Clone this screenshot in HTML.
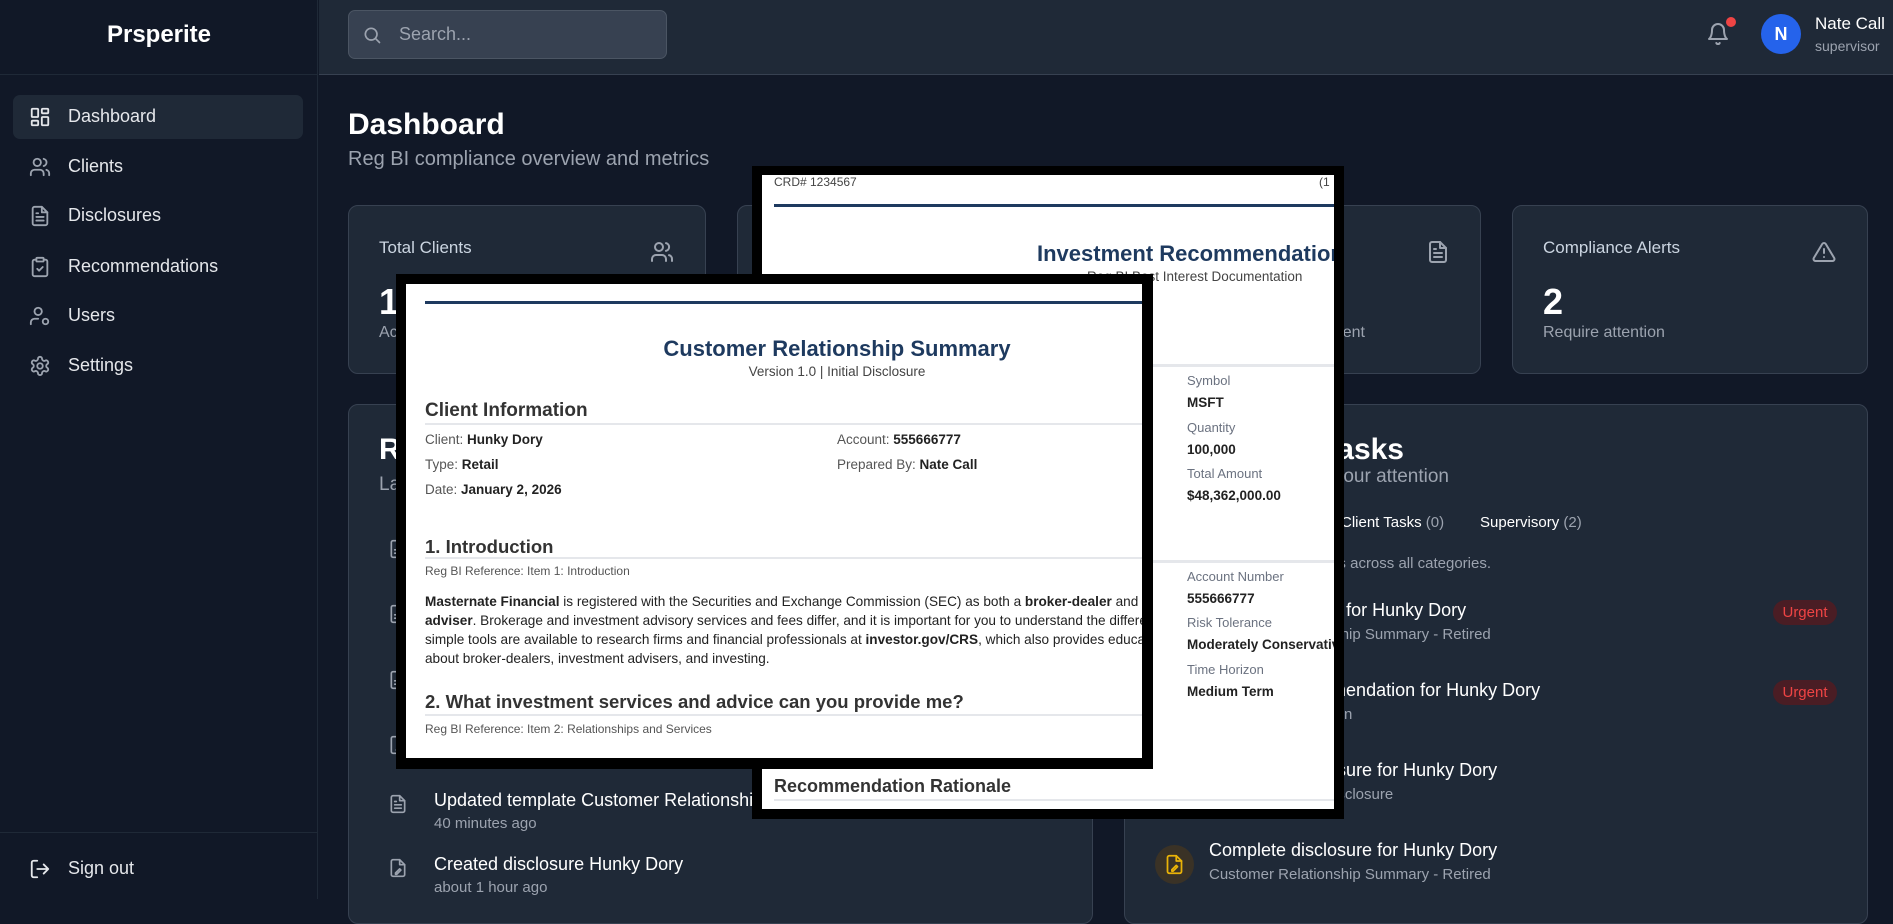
<!DOCTYPE html>
<html><head><meta charset="utf-8"><style>
*{margin:0;padding:0;box-sizing:border-box}
body{width:1893px;height:899px;overflow:hidden;background:#111827;font-family:"Liberation Sans",Arial,sans-serif;position:relative;color:#fff}
.a{position:absolute;white-space:nowrap}
svg{position:absolute;fill:none;stroke-linecap:round;stroke-linejoin:round}
.card{position:absolute;background:#1f2937;border:1px solid #374151;border-radius:10px}
.nav{position:absolute;left:68px;font-size:18px;color:#e5e7eb}
.g{color:#9ca3af}
.doc{color:#333}
.lbl{font-size:13px;color:#6b7280}
.val{font-size:13.5px;font-weight:bold;color:#222}
</style></head><body>
<!-- sidebar -->
<div class="a" style="left:0;top:0;width:318px;height:899px;background:#111827;border-right:1px solid #1f2937"></div>
<div class="a" style="left:0;top:0;width:318px;height:75px;border-bottom:1px solid #1f2937;text-align:center;line-height:70px;font-size:24px;font-weight:bold">Prsperite</div>
<div class="a" style="left:13px;top:95px;width:290px;height:44px;background:#1f2937;border-radius:7px"></div>
<svg style="left:29px;top:106px" width="22" height="22" viewBox="0 0 24 24" stroke="#e5e7eb" stroke-width="2"><rect x="3" y="3" width="7" height="9" rx="1"/><rect x="14" y="3" width="7" height="5" rx="1"/><rect x="14" y="12" width="7" height="9" rx="1"/><rect x="3" y="16" width="7" height="5" rx="1"/></svg>
<div class="nav" style="top:106px">Dashboard</div>
<svg style="left:29px;top:156px" width="22" height="22" viewBox="0 0 24 24" stroke="#9ca3af" stroke-width="2"><circle cx="9" cy="7" r="4"/><path d="M2 21v-2a4 4 0 0 1 4-4h6a4 4 0 0 1 4 4v2M16 3.1a4 4 0 0 1 0 7.8M22 21v-2a4 4 0 0 0-3-3.9"/></svg>
<div class="nav" style="top:156px">Clients</div>
<svg style="left:29px;top:205px" width="22" height="22" viewBox="0 0 24 24" stroke="#9ca3af" stroke-width="2"><path d="M14 2H6a2 2 0 0 0-2 2v16a2 2 0 0 0 2 2h12a2 2 0 0 0 2-2V8z"/><path d="M14 2v6h6M16 13H8M16 17H8M10 9H8"/></svg>
<div class="nav" style="top:205px">Disclosures</div>
<svg style="left:29px;top:256px" width="22" height="22" viewBox="0 0 24 24" stroke="#9ca3af" stroke-width="2"><rect x="8" y="2" width="8" height="4" rx="1"/><path d="M16 4h2a2 2 0 0 1 2 2v14a2 2 0 0 1-2 2H6a2 2 0 0 1-2-2V6a2 2 0 0 1 2-2h2M9 14l2 2 4-4"/></svg>
<div class="nav" style="top:256px">Recommendations</div>
<svg style="left:29px;top:305px" width="22" height="22" viewBox="0 0 24 24" stroke="#9ca3af" stroke-width="2"><circle cx="10" cy="7" r="4"/><path d="M2 21v-2a4 4 0 0 1 4-4h4"/><circle cx="18" cy="18" r="3"/></svg>
<div class="nav" style="top:305px">Users</div>
<svg style="left:29px;top:355px" width="22" height="22" viewBox="0 0 24 24" stroke="#9ca3af" stroke-width="2"><path d="M12.2 2h-.4a2 2 0 0 0-2 2v.2a2 2 0 0 1-1 1.7l-.4.3a2 2 0 0 1-2 0l-.2-.1a2 2 0 0 0-2.7.7l-.2.4a2 2 0 0 0 .7 2.7l.2.1a2 2 0 0 1 1 1.7v.5a2 2 0 0 1-1 1.7l-.2.1a2 2 0 0 0-.7 2.7l.2.4a2 2 0 0 0 2.7.7l.2-.1a2 2 0 0 1 2 0l.4.3a2 2 0 0 1 1 1.7v.2a2 2 0 0 0 2 2h.4a2 2 0 0 0 2-2v-.2a2 2 0 0 1 1-1.7l.4-.3a2 2 0 0 1 2 0l.2.1a2 2 0 0 0 2.7-.7l.2-.4a2 2 0 0 0-.7-2.7l-.2-.1a2 2 0 0 1-1-1.7v-.5a2 2 0 0 1 1-1.7l.2-.1a2 2 0 0 0 .7-2.7l-.2-.4a2 2 0 0 0-2.7-.7l-.2.1a2 2 0 0 1-2 0l-.4-.3a2 2 0 0 1-1-1.7V4a2 2 0 0 0-2-2z"/><circle cx="12" cy="12" r="3"/></svg>
<div class="nav" style="top:355px">Settings</div>
<div class="a" style="left:0;top:832px;width:318px;border-top:1px solid #1f2937"></div>
<svg style="left:29px;top:858px" width="22" height="22" viewBox="0 0 24 24" stroke="#e5e7eb" stroke-width="2"><path d="M9 21H5a2 2 0 0 1-2-2V5a2 2 0 0 1 2-2h4M16 17l5-5-5-5M21 12H9"/></svg>
<div class="nav" style="top:858px">Sign out</div>
<!-- header -->
<div class="a" style="left:319px;top:0;width:1574px;height:75px;background:#1f2937;border-bottom:1px solid #374151"></div>
<div class="a" style="left:348px;top:10px;width:319px;height:49px;background:#374151;border:1px solid #4b5563;border-radius:7px"></div>
<svg style="left:362px;top:25px" width="20" height="20" viewBox="0 0 24 24" stroke="#9ca3af" stroke-width="2"><circle cx="11" cy="11" r="7"/><path d="M21 21l-4.3-4.3"/></svg>
<div class="a g" style="left:399px;top:24px;font-size:18px">Search...</div>
<svg style="left:1706px;top:22px" width="24" height="24" viewBox="0 0 24 24" stroke="#9ca3af" stroke-width="2"><path d="M6 8a6 6 0 0 1 12 0c0 7 3 9 3 9H3s3-2 3-9M10.3 21a1.9 1.9 0 0 0 3.4 0"/></svg>
<div class="a" style="left:1726px;top:17px;width:10px;height:10px;border-radius:50%;background:#ef4444"></div>
<div class="a" style="left:1761px;top:14px;width:40px;height:40px;border-radius:50%;background:#2563eb;text-align:center;line-height:40px;font-size:18px;font-weight:bold">N</div>
<div class="a" style="left:1815px;top:14px;font-size:17px">Nate Call</div>
<div class="a g" style="left:1815px;top:38px;font-size:14px">supervisor</div>
<!-- title -->
<div class="a" style="left:348px;top:108px;font-size:30px;font-weight:bold">Dashboard</div>
<div class="a g" style="left:348px;top:148px;font-size:20px">Reg BI compliance overview and metrics</div>
<!-- stat cards -->
<div class="card" style="left:348px;top:205px;width:358px;height:169px"></div>
<div class="a g" style="left:379px;top:238px;font-size:17px;color:#cbd5e1">Total Clients</div>
<svg style="left:650px;top:240px" width="24" height="24" viewBox="0 0 24 24" stroke="#9ca3af" stroke-width="2"><circle cx="9" cy="7" r="4"/><path d="M2 21v-2a4 4 0 0 1 4-4h6a4 4 0 0 1 4 4v2M16 3.1a4 4 0 0 1 0 7.8M22 21v-2a4 4 0 0 0-3-3.9"/></svg>
<div class="a" style="left:379px;top:281px;font-size:36px;font-weight:bold">1</div>
<div class="a g" style="left:379px;top:324px;font-size:16px">Active clients</div>
<div class="card" style="left:737px;top:205px;width:356px;height:169px"></div>
<div class="card" style="left:1124px;top:205px;width:357px;height:169px"></div>
<svg style="left:1426px;top:240px" width="24" height="24" viewBox="0 0 24 24" stroke="#9ca3af" stroke-width="2"><path d="M14 2H6a2 2 0 0 0-2 2v16a2 2 0 0 0 2 2h12a2 2 0 0 0 2-2V8z"/><path d="M14 2v6h6M16 13H8M16 17H8M10 9H8"/></svg>
<div class="a g" style="right:528px;top:324px;font-size:16px">Awaiting acknowledgment</div>
<div class="card" style="left:1512px;top:205px;width:356px;height:169px"></div>
<div class="a" style="left:1543px;top:238px;font-size:17px;color:#cbd5e1">Compliance Alerts</div>
<svg style="left:1812px;top:240px" width="24" height="24" viewBox="0 0 24 24" stroke="#9ca3af" stroke-width="2"><path d="M10.3 3.9L1.8 18a2 2 0 0 0 1.7 3h17a2 2 0 0 0 1.7-3L13.7 3.9a2 2 0 0 0-3.4 0zM12 9v4M12 17h.01"/></svg>
<div class="a" style="left:1543px;top:281px;font-size:36px;font-weight:bold">2</div>
<div class="a g" style="left:1543px;top:324px;font-size:16px">Require attention</div>
<!-- panels -->
<div class="card" style="left:348px;top:404px;width:745px;height:520px"></div>
<div class="a" style="left:379px;top:433px;font-size:30px;font-weight:bold">Recent Activity</div>
<div class="a g" style="left:379px;top:474px;font-size:19px">Latest actions</div>
<svg style="left:388px;top:539px" width="20" height="20" viewBox="0 0 24 24" stroke="#9ca3af" stroke-width="2"><path d="M14 2H6a2 2 0 0 0-2 2v16a2 2 0 0 0 2 2h12a2 2 0 0 0 2-2V8z"/><path d="M14 2v6h6M16 13H8M16 17H8"/></svg>
<svg style="left:388px;top:604px" width="20" height="20" viewBox="0 0 24 24" stroke="#9ca3af" stroke-width="2"><path d="M14 2H6a2 2 0 0 0-2 2v16a2 2 0 0 0 2 2h12a2 2 0 0 0 2-2V8z"/><path d="M14 2v6h6M16 13H8M16 17H8"/></svg>
<svg style="left:388px;top:670px" width="20" height="20" viewBox="0 0 24 24" stroke="#9ca3af" stroke-width="2"><path d="M14 2H6a2 2 0 0 0-2 2v16a2 2 0 0 0 2 2h12a2 2 0 0 0 2-2V8z"/><path d="M14 2v6h6M16 13H8M16 17H8"/></svg>
<svg style="left:388px;top:735px" width="20" height="20" viewBox="0 0 24 24" stroke="#9ca3af" stroke-width="2"><path d="M14 2H6a2 2 0 0 0-2 2v16a2 2 0 0 0 2 2h12a2 2 0 0 0 2-2V8z"/><path d="M14 2v6h6M10 18l4-4"/></svg>
<svg style="left:388px;top:794px" width="20" height="20" viewBox="0 0 24 24" stroke="#9ca3af" stroke-width="2"><path d="M14 2H6a2 2 0 0 0-2 2v16a2 2 0 0 0 2 2h12a2 2 0 0 0 2-2V8z"/><path d="M14 2v6h6M16 13H8M16 17H8M10 9H8"/></svg>
<div class="a" style="left:434px;top:790px;font-size:18px">Updated template Customer Relationship Summary</div>
<div class="a g" style="left:434px;top:815px;font-size:15px">40 minutes ago</div>
<svg style="left:388px;top:858px" width="20" height="20" viewBox="0 0 24 24" stroke="#9ca3af" stroke-width="2"><path d="M14 2H6a2 2 0 0 0-2 2v16a2 2 0 0 0 2 2h12a2 2 0 0 0 2-2V8z"/><path d="M14 2v6h6M9 18l5-5 1.5 1.5-5 5H9z"/></svg>
<div class="a" style="left:434px;top:854px;font-size:18px">Created disclosure Hunky Dory</div>
<div class="a g" style="left:434px;top:879px;font-size:15px">about 1 hour ago</div>

<div class="card" style="left:1124px;top:404px;width:744px;height:520px"></div>
<div class="a" style="right:489px;top:433px;font-size:30px;font-weight:bold">Your Pending Tasks</div>
<div class="a g" style="right:444px;top:466px;font-size:19px">Tasks requiring your attention</div>
<div class="a" style="left:1190px;top:514px;font-size:15px">All (2)</div>
<div class="a" style="left:1341px;top:514px;font-size:15px">Client Tasks <span class="g">(0)</span></div>
<div class="a" style="left:1480px;top:514px;font-size:15px">Supervisory <span class="g">(2)</span></div>
<div class="a g" style="right:402px;top:555px;font-size:15px">Showing all pending tasks across all categories.</div>
<div class="a" style="left:1209px;top:600px;font-size:18px">Obtain signature for Hunky Dory</div>
<div class="a g" style="left:1209px;top:626px;font-size:15px">Customer Relationship Summary - Retired</div>
<div class="a" style="left:1773px;top:600px;width:64px;height:25px;border-radius:13px;background:#4a1d24;color:#ef4444;font-size:15px;text-align:center;line-height:25px">Urgent</div>
<div class="a" style="left:1209px;top:680px;font-size:18px">Approve recommendation for Hunky Dory</div>
<div class="a g" style="left:1209px;top:706px;font-size:15px">Microsoft Corporation</div>
<div class="a" style="left:1773px;top:680px;width:64px;height:25px;border-radius:13px;background:#4a1d24;color:#ef4444;font-size:15px;text-align:center;line-height:25px">Urgent</div>
<div class="a" style="left:1209px;top:760px;font-size:18px">Complete disclosure for Hunky Dory</div>
<div class="a g" style="left:1209px;top:786px;font-size:15px">Form CRS Initial Disclosure</div>
<div class="a" style="left:1155px;top:845px;width:39px;height:39px;border-radius:50%;background:#3a3226"></div>
<svg style="left:1164px;top:854px" width="21" height="21" viewBox="0 0 24 24" stroke="#eab308" stroke-width="2"><path d="M14 2H6a2 2 0 0 0-2 2v16a2 2 0 0 0 2 2h12a2 2 0 0 0 2-2V8z"/><path d="M14 2v6h6M9 18l5-5 1.5 1.5-5 5H9z"/></svg>
<div class="a" style="left:1209px;top:840px;font-size:18px">Complete disclosure for Hunky Dory</div>
<div class="a g" style="left:1209px;top:866px;font-size:15px">Customer Relationship Summary - Retired</div>

<!-- back doc -->
<div class="a" style="left:752px;top:166px;width:592px;height:653px;background:#000"></div>
<div class="a doc" style="left:762px;top:175px;width:572px;height:634px;background:#fff;overflow:hidden">
 <div class="a" style="left:12px;top:0;font-size:12px;color:#444">CRD# 1234567</div>
 <div class="a" style="left:557px;top:0;font-size:12px;color:#444">(1</div>
 <div class="a" style="left:12px;top:29px;width:600px;height:3px;background:#1e3a5f"></div>
 <div class="a" style="left:275px;top:66px;font-size:22px;font-weight:bold;color:#1e3a5f">Investment Recommendation</div>
 <div class="a" style="left:325px;top:94px;font-size:13.5px;color:#444">Reg BI Best Interest Documentation</div>
 <div class="a" style="left:12px;top:189px;width:600px;height:3px;background:#e5e7eb"></div>
 <div class="a lbl" style="left:425px;top:198px">Symbol</div>
 <div class="a val" style="left:425px;top:220px">MSFT</div>
 <div class="a lbl" style="left:425px;top:245px">Quantity</div>
 <div class="a val" style="left:425px;top:267px">100,000</div>
 <div class="a lbl" style="left:425px;top:291px">Total Amount</div>
 <div class="a val" style="left:425px;top:313px">$48,362,000.00</div>
 <div class="a" style="left:12px;top:385px;width:600px;height:3px;background:#e5e7eb"></div>
 <div class="a lbl" style="left:425px;top:394px">Account Number</div>
 <div class="a val" style="left:425px;top:416px">555666777</div>
 <div class="a lbl" style="left:425px;top:440px">Risk Tolerance</div>
 <div class="a val" style="left:425px;top:462px">Moderately Conservative</div>
 <div class="a lbl" style="left:425px;top:487px">Time Horizon</div>
 <div class="a val" style="left:425px;top:509px">Medium Term</div>
 <div class="a" style="left:12px;top:601px;font-size:18px;font-weight:bold;color:#333">Recommendation Rationale</div>
 <div class="a" style="left:12px;top:624px;width:600px;height:2px;background:#e5e7eb"></div>
</div>
<!-- front doc -->
<div class="a" style="left:396px;top:274px;width:757px;height:495px;background:#000"></div>
<div class="a doc" style="left:406px;top:284px;width:736px;height:474px;background:#fff;overflow:hidden">
 <div class="a" style="left:19px;top:17px;width:730px;height:3px;background:#1e3a5f"></div>
 <div class="a" style="left:0;top:52px;width:862px;text-align:center;font-size:22px;font-weight:bold;color:#1e3a5f">Customer Relationship Summary</div>
 <div class="a" style="left:0;top:80px;width:862px;text-align:center;font-size:13.5px;color:#444">Version 1.0 | Initial Disclosure</div>
 <div class="a" style="left:19px;top:116px;font-size:19px;font-weight:bold;color:#333">Client Information</div>
 <div class="a" style="left:19px;top:139px;width:730px;height:2px;background:#e5e7eb"></div>
 <div class="a" style="left:19px;top:148px;font-size:13.5px;color:#555">Client: <b style="color:#222">Hunky Dory</b></div>
 <div class="a" style="left:19px;top:173px;font-size:13.5px;color:#555">Type: <b style="color:#222">Retail</b></div>
 <div class="a" style="left:19px;top:198px;font-size:13.5px;color:#555">Date: <b style="color:#222">January 2, 2026</b></div>
 <div class="a" style="left:431px;top:148px;font-size:13.5px;color:#555">Account: <b style="color:#222">555666777</b></div>
 <div class="a" style="left:431px;top:173px;font-size:13.5px;color:#555">Prepared By: <b style="color:#222">Nate Call</b></div>
 <div class="a" style="left:19px;top:252px;font-size:18.5px;font-weight:bold;color:#333">1. Introduction</div>
 <div class="a" style="left:19px;top:273px;width:730px;height:2px;background:#e5e7eb"></div>
 <div class="a" style="left:19px;top:280px;font-size:12px;color:#555">Reg BI Reference: Item 1: Introduction</div>
 <div class="a" style="left:19px;top:308px;font-size:13.6px;line-height:19px;color:#222"><b>Masternate Financial</b> is registered with the Securities and Exchange Commission (SEC) as both a <b>broker-dealer</b> and an investment<br><b>adviser</b>. Brokerage and investment advisory services and fees differ, and it is important for you to understand the differences. Free and<br>simple tools are available to research firms and financial professionals at <b>investor.gov/CRS</b>, which also provides educational materials<br>about broker-dealers, investment advisers, and investing.</div>
 <div class="a" style="left:19px;top:407px;font-size:18.5px;font-weight:bold;color:#333">2. What investment services and advice can you provide me?</div>
 <div class="a" style="left:19px;top:430px;width:730px;height:2px;background:#e5e7eb"></div>
 <div class="a" style="left:19px;top:438px;font-size:12px;color:#555">Reg BI Reference: Item 2: Relationships and Services</div>
</div>
</body></html>
